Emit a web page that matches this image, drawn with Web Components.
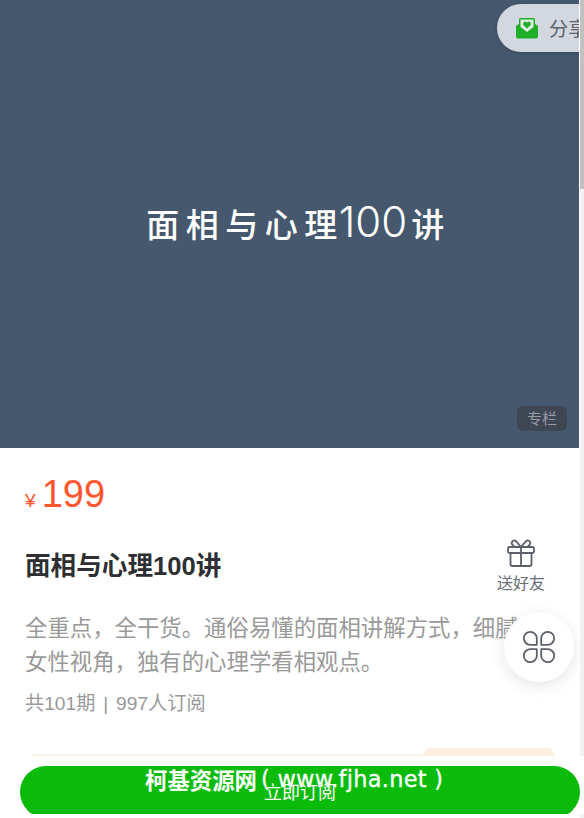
<!DOCTYPE html>
<html lang="zh">
<head>
<meta charset="utf-8">
<title>面相与心理100讲</title>
<style>
  html, body { margin: 0; height: 818px; overflow: hidden; background: #f5f5f5; }
  body { font-family: "Liberation Sans", "Noto Sans CJK SC", sans-serif; }
</style>
</head>
<body>
<column-page>
  <cover-hero title-text="面相与心理100讲" tag="专栏"></cover-hero>
  <price-tag amount="199"></price-tag>
  <column-info name="面相与心理100讲" meta="共101期 | 997人订阅">全重点，全干货。通俗易懂的面相讲解方式，细腻的女性视角，独有的心理学看相观点。</column-info>
  <coupon-strip></coupon-strip>
</column-page>
<buy-bar label="立即订阅" mark-cn="柯基资源网" mark-en="( www.fjha.net )"></buy-bar>

<script>
  // cover with the big title, tag in the corner and the share pill on top
  class CoverHero extends HTMLElement {
    constructor() {
      super();
      this.attachShadow({ mode: 'open' }).innerHTML = `
        <style>
          :host { display: flex; position: relative; height: 448px; background: #46586e;
                  align-items: center; justify-content: center; overflow: hidden; }
          .title { color: #fff; font: 500 33px/1 "Noto Sans CJK SC", sans-serif; letter-spacing: 6.5px;
                   margin: 0 0 4px 18px; white-space: nowrap; }
          .title b { font: 300 42px/1 Inter, sans-serif; letter-spacing: 0; margin: 0 4px 0 -5px; }
          .tag { position: absolute; right: 12px; bottom: 17px; width: 50px; height: 25px; border-radius: 6px;
                 background: #3f4754; color: #969ba4; font-size: 15px; line-height: 25px; text-align: center; }
          .share { position: absolute; left: 497px; top: 4px; width: 110px; height: 48px; border-radius: 24px 0 0 24px;
                   background: #d3d7df; display: flex; align-items: center; gap: 11px; padding-left: 19px;
                   color: #5c616c; font-size: 19.2px; white-space: nowrap; box-shadow: 0 1px 4px rgba(0,0,0,.15); }
          svg { width: 22px; height: 22px; flex: none; }
        </style>
        <div class="title"></div>
        <div class="tag"></div>
        <div class="share">
          <svg viewBox="0 0 22 22">
            <path fill="#1fae27" d="M4.500 1h13A1.500 1.500 0 0 1 19 2.500V7l3 2v10.500a2 2 0 0 1-2 2H2a2 2 0 0 1-2-2V9l3-2V2.500A1.500 1.500 0 0 1 4.500 1z"/>
            <path fill="#e3ece3" d="M4.500 2.500h13V10L11 15 4.500 10z"/>
            <path fill="#1fae27" d="M11 11.500 7.600 8.200a2.100 2.100 0 0 1 0-2.800 2.300 2.300 0 0 1 3.400.300 2.300 2.300 0 0 1 3.400-.300 2.100 2.100 0 0 1 0 2.800z"/>
          </svg>
          <span>分享</span>
        </div>`;
    }
    connectedCallback() {
      const title = this.shadowRoot.querySelector('.title');
      // the digits sit in a thinner latin face than the chinese
      for (const part of this.getAttribute('title-text').match(/\d+|\D+/g)) {
        const el = document.createElement(/\d/.test(part) ? 'b' : 'span');
        el.textContent = part;
        title.appendChild(el);
      }
      this.shadowRoot.querySelector('.tag').textContent = this.getAttribute('tag');
    }
  }

  class PriceTag extends HTMLElement {
    constructor() {
      super();
      this.attachShadow({ mode: 'open' }).innerHTML = `
        <style>
          :host { display: flex; align-items: baseline; gap: 6px; padding: 24px 0 0 25px; height: 46px; color: #ff5630; }
          .unit { font-size: 19.2px; }
          .num { font-size: 38px; line-height: 44px; }
        </style>
        <span class="unit">¥</span><span class="num"></span>`;
    }
    connectedCallback() {
      this.shadowRoot.querySelector('.num').textContent = this.getAttribute('amount');
    }
  }

  class GiftButton extends HTMLElement {
    constructor() {
      super();
      this.attachShadow({ mode: 'open' }).innerHTML = `
        <style>
          :host { display: flex; flex-direction: column; align-items: center; gap: 5px; color: #666b75; font-size: 16px; line-height: 22px; }
          svg { width: 30px; height: 30px; }
        </style>
        <svg viewBox="0 0 30 30" fill="none" stroke="#5b606a" stroke-width="1.800" stroke-linejoin="round" stroke-linecap="round">
          <rect x="2" y="9" width="26" height="6" rx="1.500"/>
          <path d="M4.500 15v11a2 2 0 0 0 2 2h17a2 2 0 0 0 2-2V15M15 9v19"/>
          <path d="M15 9 10 3.200a2.500 2.500 0 0 0-3.800 3.200L8.500 9M15 9l5-5.800a2.500 2.500 0 0 1 3.800 3.200L21.500 9"/>
        </svg>
        <span>送好友</span>`;
    }
  }

  class FloatMenu extends HTMLElement {
    constructor() {
      super();
      this.attachShadow({ mode: 'open' }).innerHTML = `
        <style>
          :host { display: flex; position: absolute; left: 504px; top: 94px; width: 70px; height: 70px; border-radius: 50%;
                  background: #fff; box-shadow: 0 4px 16px rgba(0,0,0,.1); align-items: center; justify-content: center; }
          svg { width: 34px; height: 34px; }
        </style>
        <svg viewBox="0 0 34 34" fill="none" stroke="#5b606a" stroke-width="1.800" stroke-linejoin="round">
          <path d="M14.800 14.800H8.500A6.500 6.500 0 1 1 14.800 8.500z"/>
          <path d="M19.200 14.800h6.300A6.500 6.500 0 1 0 19.200 8.500z"/>
          <path d="M14.800 19.200H8.500A6.500 6.500 0 1 0 14.800 25.500z"/>
          <path d="M19.200 19.200h6.300A6.500 6.500 0 1 1 19.200 25.500z"/>
        </svg>`;
    }
  }
  customElements.define('float-menu', FloatMenu);

  class ColumnInfo extends HTMLElement {
    constructor() {
      super();
      this.attachShadow({ mode: 'open' }).innerHTML = `
        <style>
          :host { display: block; position: relative; padding: 3px 0 0 25px; height: 230px; box-sizing: border-box; }
          .head { display: flex; justify-content: space-between; align-items: center; height: 90px; padding-right: 34px; }
          h1 { margin: 0 0 6px; font-size: 25.6px; font-weight: 700; color: #2d2f33; }
          .desc { margin: 1px 0 0; width: 520px; font-size: 22.4px; line-height: 33.6px; color: #999; }
          .meta { margin-top: 12px; font-size: 19.2px; line-height: 26px; color: #999; word-spacing: 2.5px; }
        </style>
        <div class="head"><h1></h1><gift-button></gift-button></div>
        <p class="desc"><slot></slot></p>
        <div class="meta"></div>
        <float-menu></float-menu>`;
    }
    connectedCallback() {
      this.shadowRoot.querySelector('h1').textContent = this.getAttribute('name');
      this.shadowRoot.querySelector('.meta').textContent = this.getAttribute('meta');
    }
  }

  // only the top edge of the coupon card peeks out above the buy bar
  class CouponStrip extends HTMLElement {
    constructor() {
      super();
      this.attachShadow({ mode: 'open' }).innerHTML = `
        <style>
          :host { display: flex; align-items: flex-start; padding: 0 24px 0 30px; height: 12px; box-sizing: border-box; }
          .card { flex: 1; height: 20px; margin-top: 6px; background: #fbf1e7; border-radius: 6px 0 0 0; }
          .badge { width: 133px; height: 30px; background: #fdeedd; clip-path: polygon(5px 0, 128px 0, 133px 8px, 0 8px); }
        </style>
        <div class="card"></div><div class="badge"></div>`;
    }
  }

  class BuyBar extends HTMLElement {
    constructor() {
      super();
      this.attachShadow({ mode: 'open' }).innerHTML = `
        <style>
          :host { display: block; position: fixed; left: 0; right: 0; top: 756px; height: 58px; background: #fff;
                  overflow: hidden; }
          .btn { position: absolute; left: 20px; top: 10px; width: 560px; height: 52px; border-radius: 26px; background: #0abb0a;
                 color: #fff; font-size: 18px; line-height: 54px; text-align: center; }
          .mark { position: absolute; left: 145px; top: 9px; color: #fff; white-space: nowrap; display: flex; align-items: center; height: 28px; gap: 4px; }
          .cn { font: 700 22.400px/28px "Noto Sans CJK SC", sans-serif; }
          .en { font: 400 22.400px/28px "DejaVu Sans", sans-serif; letter-spacing: .3px; -webkit-text-stroke: .3px #fff; }
        </style>
        <div class="btn"></div>
        <div class="mark"><span class="cn"></span><span class="en"></span></div>`;
    }
    connectedCallback() {
      this.shadowRoot.querySelector('.btn').textContent = this.getAttribute('label');
      this.shadowRoot.querySelector('.cn').textContent = this.getAttribute('mark-cn');
      this.shadowRoot.querySelector('.en').textContent = this.getAttribute('mark-en');
    }
  }

  // page shell: content column plus the thin scrollbar on the right
  class ColumnPage extends HTMLElement {
    constructor() {
      super();
      this.attachShadow({ mode: 'open' }).innerHTML = `
        <style>
          :host { display: grid; grid-template-columns: 579px 5px; height: 818px; background: #f5f5f5; overflow: hidden; }
          main { background: #fff; overflow: hidden; height: 818px; }
          .bar { background: #f1f1f1; border-left: 1px solid #fff; }
          .thumb { height: 189px; background: #c1c1c1; }
        </style>
        <main><slot></slot></main>
        <div class="bar"><div class="thumb"></div></div>`;
    }
  }

  customElements.define('cover-hero', CoverHero);
  customElements.define('price-tag', PriceTag);
  customElements.define('gift-button', GiftButton);
  customElements.define('column-info', ColumnInfo);
  customElements.define('coupon-strip', CouponStrip);
  customElements.define('buy-bar', BuyBar);
  customElements.define('column-page', ColumnPage);
</script>
</body>
</html>
